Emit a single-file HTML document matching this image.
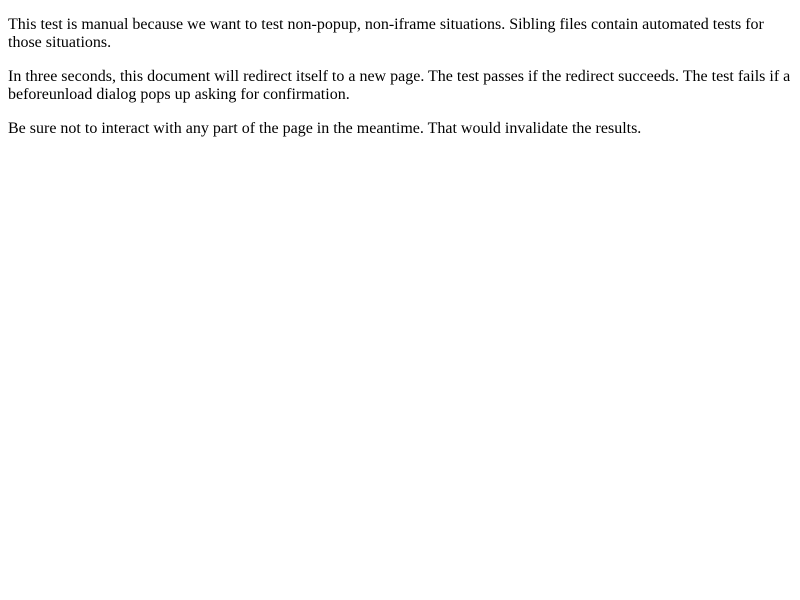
<!DOCTYPE html>
<html><head><meta charset="utf-8"><style>
body{margin:8px;font-family:"Liberation Serif",serif;font-size:16px;color:#000;background:#fff;}
p{margin:16px 0;}
</style></head><body>
<p>This test is manual because we want to test non-popup, non-iframe situations. Sibling files contain automated tests for those situations.</p>
<p>In three seconds, this document will redirect itself to a new page. The test passes if the redirect succeeds. The test fails if a beforeunload dialog pops up asking for confirmation.</p>
<p>Be sure not to interact with any part of the page in the meantime. That would invalidate the results.</p>
</body></html>
